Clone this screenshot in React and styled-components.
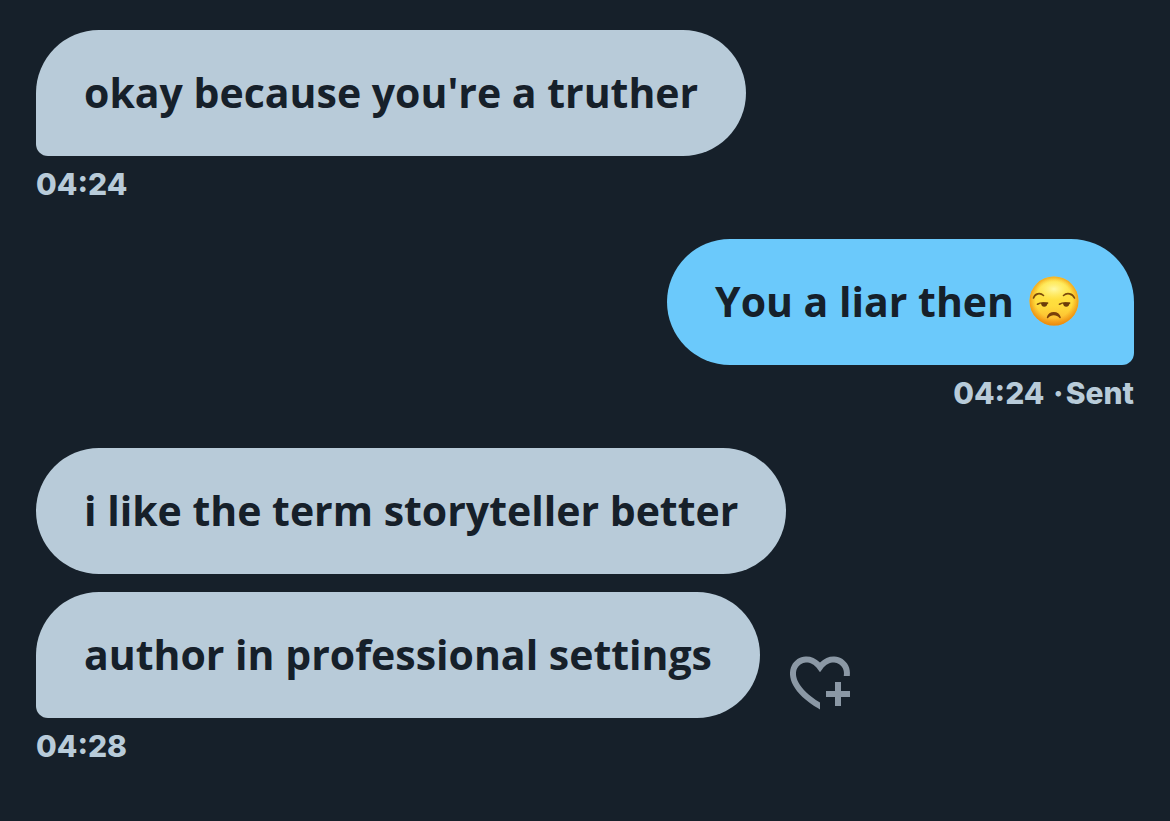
import React from "react";
import styled, { createGlobalStyle } from "styled-components";

const GlobalStyle = createGlobalStyle`
  * {
    box-sizing: border-box;
  }

  body {
    margin: 0;
    background: #16202a;
    font-family: "Open Sans", "Noto Sans", sans-serif;
    font-weight: 700;
  }
`;

const Conversation = styled.main`
  min-height: 100vh;
  padding: 30px 36px;
  display: flex;
  flex-direction: column;
  gap: 35px;
`;

const Group = styled.section`
  display: flex;
  flex-direction: column;
  align-items: ${({ $sent }) => ($sent ? "flex-end" : "flex-start")};
`;

const Row = styled.div`
  display: flex;
  align-items: flex-end;
  gap: 24px;

  & + & {
    margin-top: 18px;
  }
`;

const corners = {
  none: "63px",
  left: "63px 63px 63px 12px",
  right: "63px 63px 12px 63px",
};

const Bubble = styled.p`
  margin: 0;
  padding: 35px 48px 37px;
  display: flex;
  align-items: center;
  border-radius: ${({ $tail }) => corners[$tail]};
  background: ${({ $sent }) => ($sent ? "#6bc9fb" : "#b8cbd9")};
  color: #16202a;
  font-size: 41px;
  line-height: 54px;
`;

const Meta = styled.div`
  margin-top: 8px;
  color: #b8cbd9;
  font-family: Inter, sans-serif;
  font-size: 30px;
  font-weight: 800;
  line-height: 40px;
`;

const Dot = styled.span`
  margin: 0 2px;
`;

const ReactButton = styled.button`
  display: flex;
  padding: 0;
  border: none;
  background: none;
  color: #8b98a5;
  cursor: pointer;
`;

const Face = styled.svg`
  flex: none;
  width: 50px;
  height: 50px;
  margin: 0 7px 0 15px;
`;

function HeartPlusIcon() {
  return (
    <svg width="72" height="72" viewBox="0 0 24 24" fill="currentColor" aria-hidden="true">
      <path d="M17 12v3h-2.998v2h3v3h2v-3h3v-2h-3.001v-3H17zm-5 6.839c-3.871-2.34-6.053-4.639-7.127-6.609-1.112-2.04-1.031-3.7-.479-4.82.561-1.13 1.667-1.84 2.91-1.91 1.222-.06 2.68.51 3.892 2.16l.806 1.09.805-1.09c1.211-1.65 2.668-2.22 3.89-2.16 1.242.07 2.347.78 2.908 1.91.334.677.49 1.554.321 2.59h2.011c.153-1.283-.039-2.469-.539-3.48-.887-1.79-2.647-2.91-4.601-3.01-1.65-.09-3.367.56-4.796 2.01-1.43-1.45-3.147-2.1-4.798-2.01-1.954.1-3.714 1.22-4.601 3.01-.896 1.81-.846 4.17.514 6.67 1.353 2.48 4.003 5.12 8.382 7.67l.502.299v-2.32z" />
    </svg>
  );
}

function UnamusedFace() {
  return (
    <Face viewBox="0 0 50 50" role="img" aria-label="unamused face">
      <defs>
        <linearGradient id="skin" x1="0" y1="0" x2="0" y2="1">
          <stop offset="0" stopColor="#ffe84a" />
          <stop offset="0.6" stopColor="#ffdc3c" />
          <stop offset="0.85" stopColor="#fdc031" />
          <stop offset="1" stopColor="#f5a01f" />
        </linearGradient>
        <radialGradient id="rim" cx="0.5" cy="0.48" r="0.53">
          <stop offset="0.7" stopColor="#ee8f10" stopOpacity="0" />
          <stop offset="1" stopColor="#e98508" stopOpacity="0.9" />
        </radialGradient>
        <radialGradient id="shine" cx="0.5" cy="0.5" r="0.5">
          <stop offset="0" stopColor="#fffbb0" stopOpacity="0.9" />
          <stop offset="1" stopColor="#fff27a" stopOpacity="0" />
        </radialGradient>
      </defs>
      <circle cx="25" cy="25" r="24.5" fill="url(#skin)" />
      <circle cx="25" cy="25" r="24.5" fill="url(#rim)" />
      <ellipse cx="25" cy="13" rx="18" ry="11" fill="url(#shine)" />
      <g fill="none" stroke="#7a4a0c" strokeLinecap="round">
        <path d="M4.5 22C6 17.5 11 16.3 14.5 19.5" strokeWidth="1.6" />
        <path d="M34.5 19.5C38 16.3 43.5 17.5 45.5 22" strokeWidth="1.6" />
        <path d="M8.5 28.2C11 26.6 14.5 26.4 18.5 27.2" strokeWidth="1.7" />
        <path d="M30.5 28.2C33 26.6 36.5 26.4 40.5 27.2" strokeWidth="1.7" />
      </g>
      <path d="M12 27h6.4c.2 2.1-1.2 3.8-3.2 3.8S12.1 29.2 12 27z" fill="#6b3d0a" />
      <path d="M34 27h6.4c.2 2.1-1.2 3.8-3.2 3.8S34.1 29.2 34 27z" fill="#6b3d0a" />
      <path
        d="M17.8 41.3c.9-3.5 3.7-5.3 7-5.3s6.1 1.8 7 5.3c.1.9-.8 1.1-1.3.6-1.5-1.7-3.4-2.7-5.7-2.7s-4.2 1-5.7 2.7c-.5.5-1.4.3-1.3-.6z"
        fill="#7a3f0a"
      />
    </Face>
  );
}

function App() {
  return (
    <>
      <GlobalStyle />
      <Conversation>
        <Group>
          <Row>
            <Bubble $tail="left">okay because you're a truther</Bubble>
          </Row>
          <Meta>04:24</Meta>
        </Group>

        <Group $sent>
          <Row>
            <Bubble $sent $tail="right">
              You a liar then
              <UnamusedFace />
            </Bubble>
          </Row>
          <Meta>
            04:24 <Dot>·</Dot>Sent
          </Meta>
        </Group>

        <Group>
          <Row>
            <Bubble $tail="none">i like the term storyteller better</Bubble>
          </Row>
          <Row>
            <Bubble $tail="left">author in professional settings</Bubble>
            <ReactButton type="button" aria-label="Add reaction">
              <HeartPlusIcon />
            </ReactButton>
          </Row>
          <Meta>04:28</Meta>
        </Group>
      </Conversation>
    </>
  );
}

export default App;
